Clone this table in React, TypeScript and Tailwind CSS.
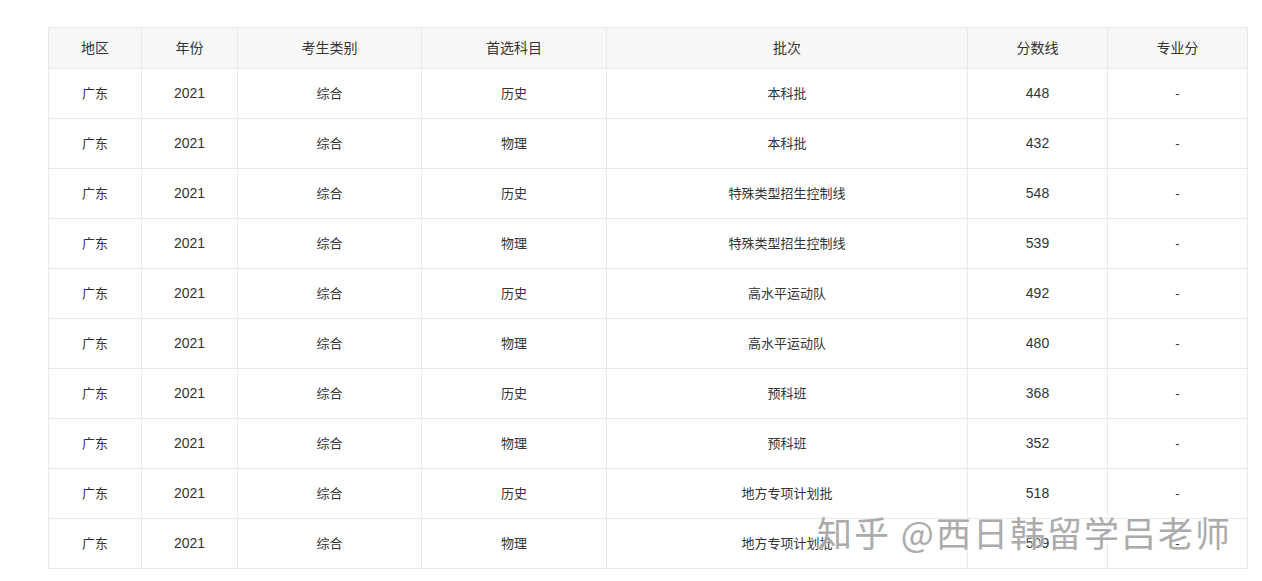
import React from "react";

const HEAD = ['地区', '年份', '考生类别', '首选科目', '批次', '分数线', '专业分']
const WIDTHS = ['w-[93px]', 'w-[96px]', 'w-[184px]', 'w-[185px]', 'w-[361px]', 'w-[140px]', 'w-[140px]']

const ROWS: [string, string, number][] = [
  ['历史', '本科批', 448],
  ['物理', '本科批', 432],
  ['历史', '特殊类型招生控制线', 548],
  ['物理', '特殊类型招生控制线', 539],
  ['历史', '高水平运动队', 492],
  ['物理', '高水平运动队', 480],
  ['历史', '预科班', 368],
  ['物理', '预科班', 352],
  ['历史', '地方专项计划批', 518],
  ['物理', '地方专项计划批', 509],
]

export default function App() {
  return (
    <div
      className="relative w-[1262px] h-[581px] bg-white overflow-hidden text-[#333]"
      style={{ fontFamily: '"Liberation Sans", "Noto Sans CJK SC", sans-serif' }}
    >
      <div className="pt-[27px] pl-[48px]">
        <table className="border-collapse table-fixed w-[1199px]">
          <thead>
            <tr className="h-[41px] bg-[#f7f7f7]">
              {HEAD.map((h, i) => (
                <th key={h} className={`${WIDTHS[i]} border border-[#e9e9e9] text-[14px] font-normal text-center p-0`}>
                  {h}
                </th>
              ))}
            </tr>
          </thead>
          <tbody>
            {ROWS.map(([subject, batch, score], i) => (
              <tr key={i} className="h-[50px]">
                <td className="border border-[#e9e9e9] text-[13px] text-center p-0">广东</td>
                <td className="border border-[#e9e9e9] text-[14px] text-center p-0">2021</td>
                <td className="border border-[#e9e9e9] text-[13px] text-center p-0">综合</td>
                <td className="border border-[#e9e9e9] text-[13px] text-center p-0">{subject}</td>
                <td className="border border-[#e9e9e9] text-[13px] text-center p-0">{batch}</td>
                <td className="border border-[#e9e9e9] text-[14px] text-center p-0">{score}</td>
                <td className="border border-[#e9e9e9] text-[13px] text-center p-0">-</td>
              </tr>
            ))}
          </tbody>
        </table>
      </div>

      {/* watermark */}
      <div
        className="absolute left-[817px] top-[509px] text-[35px] leading-[46px] tracking-[2px] text-[#a3a3a3] opacity-90 whitespace-nowrap"
        style={{ fontFamily: '"Noto Sans CJK SC", sans-serif', textShadow: '0 0 2px #fff, 0 0 2px #fff' }}
      >
        知乎 @西日韩留学吕老师
      </div>
    </div>
  )
}
